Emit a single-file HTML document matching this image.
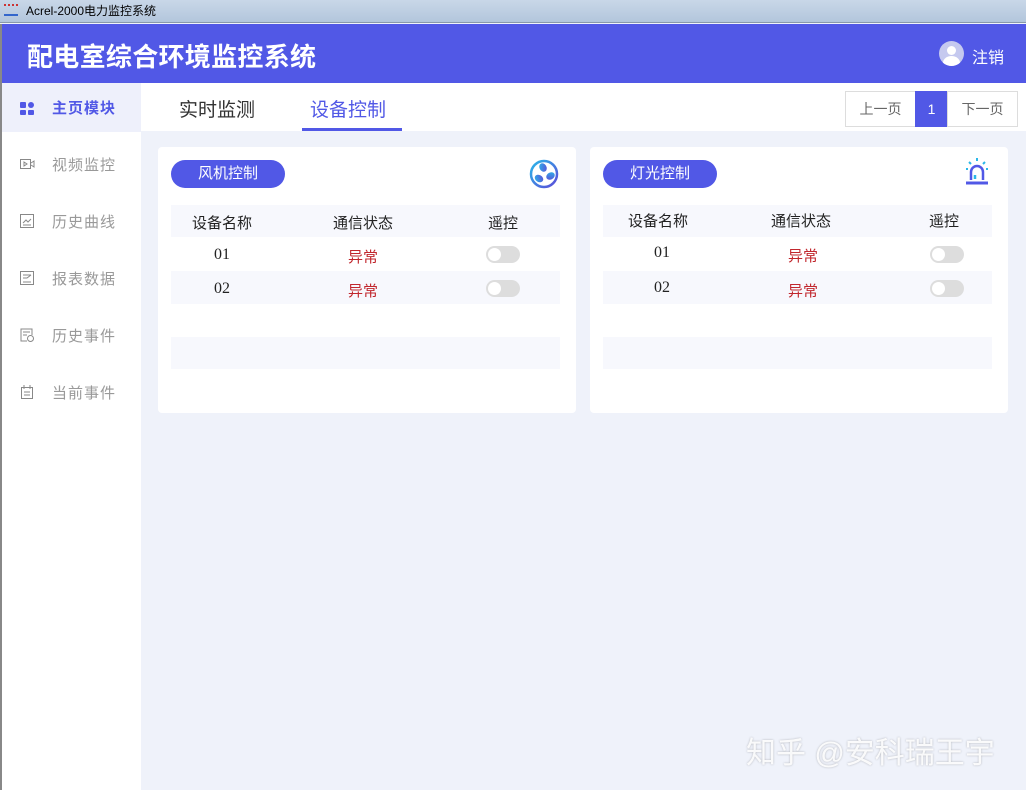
<!DOCTYPE html>
<html><head><meta charset="utf-8"><style>
*{margin:0;padding:0;box-sizing:border-box}
body{width:1026px;height:790px;overflow:hidden;background:#eff2fa;font-family:"Liberation Sans","Noto Sans CJK SC",sans-serif;position:relative}
.tb{position:absolute;left:0;top:0;width:1026px;height:23px;background:linear-gradient(#c9d7e8,#b3c6dc);border-bottom:1px solid #8899aa;font-size:12px;color:#000;line-height:22px;padding-left:26px}
.hd{position:absolute;left:0;top:24px;width:1026px;height:59px;background:#5158e6;border-left:2px solid #888}
.hd h1{position:absolute;left:25px;top:13px;color:#fff;font-size:26px;font-weight:bold;letter-spacing:0.3px}
.av{position:absolute;left:937px;top:17px;width:25px;height:25px;border-radius:50%;background:#c5c9ef;overflow:hidden}
.lo{position:absolute;left:970px;top:20px;color:#fff;font-size:16px}
.sb{position:absolute;left:0;top:83px;width:141px;height:707px;background:#fff;border-left:2px solid #888}
.it{height:57px;display:flex;align-items:center;padding-left:17px;padding-top:7px;font-size:15px;color:#999;letter-spacing:1px}
.it.a{background:#eef0fb;color:#5158e6;height:49px;padding-top:0;font-weight:bold}
.it svg{margin-right:17px}
.tabs{position:absolute;left:141px;top:83px;width:885px;height:48px;background:#fff}
.tab{position:absolute;top:12px;font-size:19px;color:#333}
.pg{position:absolute;top:91px;height:36px;border:1px solid #ddd;background:#fff;font-size:14px;color:#666;text-align:center;line-height:34px}
.card{position:absolute;top:147px;width:418px;height:266px;background:#fff;border-radius:4px}
.pill{position:absolute;left:13px;top:13px;width:114px;height:28px;border-radius:14px;background:#5158e6;color:#fff;font-size:15px;line-height:28px;text-align:center}
.row{position:absolute;left:13px;width:389px;font-size:15px;color:#222}
.row span{position:absolute;transform:translateX(-50%);white-space:nowrap}
.l{background:#f7f8fd}
.r{color:#c1272d}
.n{font-family:"Liberation Serif",serif;font-size:16px}
.sw{width:34px;height:17px;border-radius:9px;background:#ddd;position:absolute;transform:translateX(-50%)}
.sw::after{content:"";position:absolute;left:2px;top:2px;width:13px;height:13px;border-radius:50%;background:#fff}
.wm{position:absolute;left:746px;top:728px;font-size:30px;color:rgba(255,255,255,0.9);text-shadow:0 0 2px rgba(0,0,0,0.25)}
</style></head><body>
<div class="tb"><span style="position:absolute;left:4px;top:4px;width:14px;height:12px;border-top:2px dotted #c33;border-bottom:2px solid #36c"></span>Acrel-2000电力监控系统</div>
<div class="hd"><h1>配电室综合环境监控系统</h1>
<div class="av"><div style="position:absolute;left:8px;top:5px;width:9px;height:9px;border-radius:50%;background:#fff"></div><div style="position:absolute;left:4px;top:15px;width:17px;height:14px;border-radius:50%;background:#fff"></div></div>
<div class="lo">注销</div></div>
<div class="sb">
<div class="it a"><svg width="16" height="16"><rect x="1" y="2" width="6" height="6" rx="1" fill="#5158e6"/><circle cx="12" cy="5" r="3" fill="#5158e6"/><rect x="1" y="10" width="6" height="5" rx="1" fill="#5158e6"/><rect x="9" y="10" width="6" height="5" rx="1" fill="#5158e6"/></svg>主页模块</div>
<div class="it"><svg width="16" height="16" fill="none" stroke="#888"><rect x="1.5" y="3.5" width="10" height="9"/><path d="M12 7l3-2v6l-3-2M5 6l3 2-3 2z"/></svg>视频监控</div>
<div class="it"><svg width="16" height="16" fill="none" stroke="#888"><rect x="1.5" y="1.5" width="13" height="13"/><path d="M4 10l3-3 2 2 3-3M4 12h8"/></svg>历史曲线</div>
<div class="it"><svg width="16" height="16" fill="none" stroke="#888"><rect x="1.5" y="1.5" width="13" height="13"/><path d="M4 5h8M4 8h4l4-3M4 12h8"/></svg>报表数据</div>
<div class="it"><svg width="16" height="16" fill="none" stroke="#888"><path d="M8 14H2V2h11v6"/><path d="M4 5h7M4 8h4"/><circle cx="11.5" cy="11.5" r="3"/></svg>历史事件</div>
<div class="it"><svg width="16" height="16" fill="none" stroke="#888"><rect x="2.5" y="3.5" width="11" height="11"/><path d="M5 1v4M11 1v4M5 8h6M5 11h6"/></svg>当前事件</div>
</div>
<div class="tabs"><span class="tab" style="left:38px">实时监测</span><span class="tab" style="left:169px;color:#5158e6">设备控制</span><div style="position:absolute;left:161px;top:45px;width:100px;height:3px;background:#5158e6"></div></div>
<div class="pg" style="left:845px;width:71px">上一页</div>
<div class="pg" style="left:915px;width:33px;background:#5158e6;color:#fff;border-color:#5158e6">1</div>
<div class="pg" style="left:947px;width:71px">下一页</div>

<div class="card" style="left:158px">
<div class="pill">风机控制</div>
<svg style="position:absolute;left:371px;top:12px" width="30" height="30" viewBox="0 0 30 30"><defs><linearGradient id="g" x1="0" y1="0" x2="1" y2="1"><stop offset="0" stop-color="#2bb7e8"/><stop offset="1" stop-color="#5b4bd9"/></linearGradient></defs><circle cx="15" cy="15" r="13" fill="none" stroke="url(#g)" stroke-width="2.5"/><ellipse cx="14" cy="8.5" rx="3.5" ry="4.5" fill="url(#g)" transform="rotate(-30 14 8.5)"/><ellipse cx="21.5" cy="17" rx="3.5" ry="4.5" fill="url(#g)" transform="rotate(60 21.5 17)"/><ellipse cx="10" cy="19.5" rx="3.5" ry="4.5" fill="url(#g)" transform="rotate(-60 10 19.5)"/><circle cx="15" cy="15" r="2" fill="#fff"/></svg>
<div class="row l" style="top:58px;height:32px"><span style="left:51px;top:7px">设备名称</span><span style="left:192px;top:7px">通信状态</span><span style="left:332px;top:7px">遥控</span></div>
<div class="row" style="top:90px;height:34px"><span class="n" style="left:51px;top:9px">01</span><span class="r" style="left:192px;top:9px">异常</span><div class="sw" style="left:332px;top:9px"></div></div>
<div class="row l" style="top:124px;height:33px"><span class="n" style="left:51px;top:9px">02</span><span class="r" style="left:192px;top:9px">异常</span><div class="sw" style="left:332px;top:9px"></div></div>
<div class="row l" style="top:190px;height:32px"></div>
</div>
<div class="card" style="left:590px">
<div class="pill">灯光控制</div>
<svg style="position:absolute;left:372px;top:10px" width="30" height="30" viewBox="0 0 30 30" fill="none" stroke-width="2.5"><path d="M15 1v3M7 5l2 2M23 5l-2 2M4 12h2M24 12h2" stroke="#2bb7e8" stroke-width="2"/><path d="M9 23v-8a6 6 0 0 1 12 0v8" stroke="#5158e6"/><path d="M4 26h22" stroke="#5158e6" stroke-width="3"/><path d="M13 18v4" stroke="#2bb7e8"/></svg>
<div class="row l" style="top:58px;height:32px"><span style="left:55px;top:5px">设备名称</span><span style="left:198px;top:5px">通信状态</span><span style="left:341px;top:5px">遥控</span></div>
<div class="row" style="top:90px;height:34px"><span class="n" style="left:59px;top:7px">01</span><span class="r" style="left:200px;top:8px">异常</span><div class="sw" style="left:344px;top:9px"></div></div>
<div class="row l" style="top:124px;height:33px"><span class="n" style="left:59px;top:8px">02</span><span class="r" style="left:200px;top:9px">异常</span><div class="sw" style="left:344px;top:9px"></div></div>
<div class="row l" style="top:190px;height:32px"></div>
</div>
<div class="wm">知乎 @安科瑞王宇</div>
</body></html>
